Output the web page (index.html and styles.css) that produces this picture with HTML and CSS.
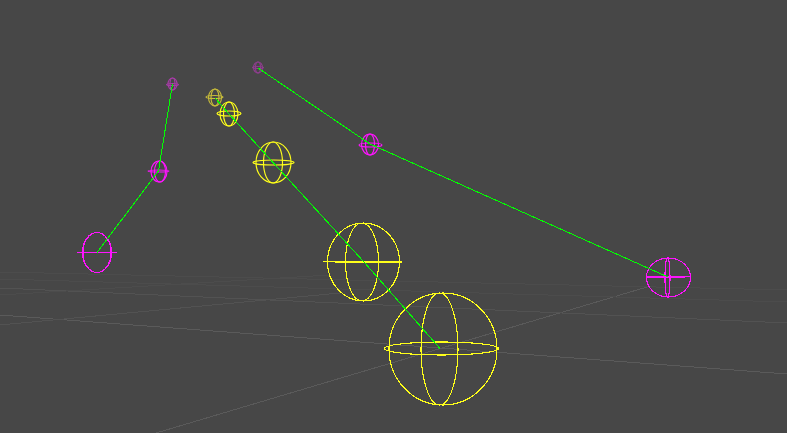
FILE: index.html
```html
<!DOCTYPE html>
<html lang="en">
<head>
    <meta charset="UTF-8">
    <meta name="viewport" content="width=device-width, initial-scale=1.0">
    <title>Viewport</title>
    <link rel="stylesheet" href="styles.css">
</head>
<body>
    <svg class="viewport" viewBox="0 0 787 433" xmlns="http://www.w3.org/2000/svg">
        <!-- ground grid -->
        <g class="grid">
            <line x1="156" y1="433" x2="647" y2="287"/>
            <line x1="0" y1="315" x2="787" y2="374"/>
        </g>
        <g class="grid mid">
            <line x1="0" y1="325" x2="340" y2="293"/>
            <line x1="0" y1="288" x2="787" y2="323"/>
        </g>
        <g class="grid faint">
            <line x1="0" y1="295" x2="330" y2="275"/>
            <line x1="0" y1="279" x2="787" y2="302"/>
            <line x1="0" y1="272" x2="787" y2="290"/>
        </g>

        <!-- left chain -->
        <g class="wire magenta dim soft">
            <ellipse cx="172.5" cy="84" rx="4.5" ry="6"/>
            <ellipse cx="172.5" cy="84" rx="2.5" ry="6"/>
            <ellipse cx="172.5" cy="84.5" rx="6" ry="1"/>
        </g>
        <g class="wire magenta soft">
            <ellipse cx="159" cy="171.5" rx="8" ry="10.5"/>
            <ellipse cx="160" cy="171.5" rx="5.5" ry="10.5"/>
            <ellipse cx="158.5" cy="171" rx="10.5" ry="1"/>
        </g>
        <g class="wire magenta">
            <ellipse cx="97" cy="252.5" rx="14.5" ry="20"/>
            <ellipse cx="97" cy="252.5" rx="14" ry="20"/>
            <line x1="77" y1="252.5" x2="117" y2="252.5"/>
        </g>

        <!-- middle chain -->
        <g class="wire yellow dim soft">
            <ellipse cx="215" cy="97.5" rx="6.5" ry="8.5"/>
            <ellipse cx="215" cy="97.5" rx="4" ry="8.5"/>
            <ellipse cx="214.5" cy="97" rx="8.5" ry="1.5"/>
        </g>
        <g class="wire yellow soft">
            <ellipse cx="229" cy="114" rx="9" ry="12"/>
            <ellipse cx="229" cy="114" rx="5.5" ry="12"/>
            <ellipse cx="229" cy="113.5" rx="12" ry="2.5"/>
            <ellipse cx="273.5" cy="162.5" rx="17.5" ry="20.5"/>
            <ellipse cx="273" cy="162.5" rx="9.5" ry="20.5"/>
            <ellipse cx="273.5" cy="162.5" rx="20.5" ry="2.5"/>
        </g>
        <g class="wire yellow">
            <ellipse cx="363.5" cy="262" rx="36" ry="39"/>
            <ellipse cx="362" cy="262" rx="16.5" ry="39"/>
            <line class="thick" x1="335" y1="262" x2="402" y2="262"/>
            <line x1="323" y1="261.5" x2="335" y2="261.5"/>
            <ellipse cx="443" cy="349" rx="54" ry="56"/>
            <ellipse cx="439.5" cy="349" rx="18.5" ry="56"/>
            <ellipse cx="441.5" cy="348.5" rx="57" ry="6.5"/>
        </g>

        <!-- right chain -->
        <g class="wire magenta dim darker soft">
            <ellipse cx="258" cy="67.5" rx="4.5" ry="5.5"/>
            <ellipse cx="258" cy="67.5" rx="2.5" ry="5.5"/>
            <ellipse cx="258" cy="67.5" rx="5.5" ry="1"/>
        </g>
        <g class="wire magenta soft">
            <ellipse cx="370" cy="144.5" rx="8.5" ry="10.5"/>
            <ellipse cx="370" cy="144.5" rx="4.5" ry="10.5"/>
            <ellipse cx="370.5" cy="145" rx="11.5" ry="2"/>
        </g>
        <g class="wire magenta">
            <ellipse cx="668.5" cy="277.5" rx="22" ry="19.5"/>
            <ellipse cx="667.5" cy="277.5" rx="2.5" ry="19.5"/>
            <line class="thick" x1="646" y1="277" x2="685" y2="277"/>
            <line x1="685" y1="276.5" x2="690" y2="276.5"/>
        </g>

        <!-- bones -->
        <g class="bone">
            <polyline points="172.5,84 158.5,171 97,252.5"/>
            <polyline points="215,98 229,114 273.5,163 364,262 440,348.5"/>
            <polyline points="258,68 370,144 668,277"/>
        </g>
    </svg>
</body>
</html>
```

FILE: styles.css
```css
html, body {
    margin: 0;
    padding: 0;
    height: 100%;
    background-color: #474747;
    overflow: hidden;
}

.viewport {
    display: block;
    width: 787px;
    height: 433px;
}

.viewport * {
    fill: none;
    stroke-width: 1;
    shape-rendering: crispEdges;
}

.grid {
    stroke: #5a5a5a;
}

.grid.mid {
    stroke: #525252;
}

.grid.faint {
    stroke: #4c4c4c;
}

.wire.yellow {
    stroke: #ffff1a;
}

.wire.yellow.dim {
    stroke: #c9bd3a;
}

.wire.magenta {
    stroke: #ff14ff;
}

.wire.magenta.dim {
    stroke: #a83ca8;
}

.wire.magenta.dim.darker {
    stroke: #8e3e8e;
}

.viewport .wire ellipse {
    stroke-width: 1.1;
}

.viewport .soft ellipse {
    stroke-width: 1.15;
    shape-rendering: geometricPrecision;
}

.viewport .thick {
    stroke-width: 2;
}

.bone {
    stroke: #00ff00;
}
```
